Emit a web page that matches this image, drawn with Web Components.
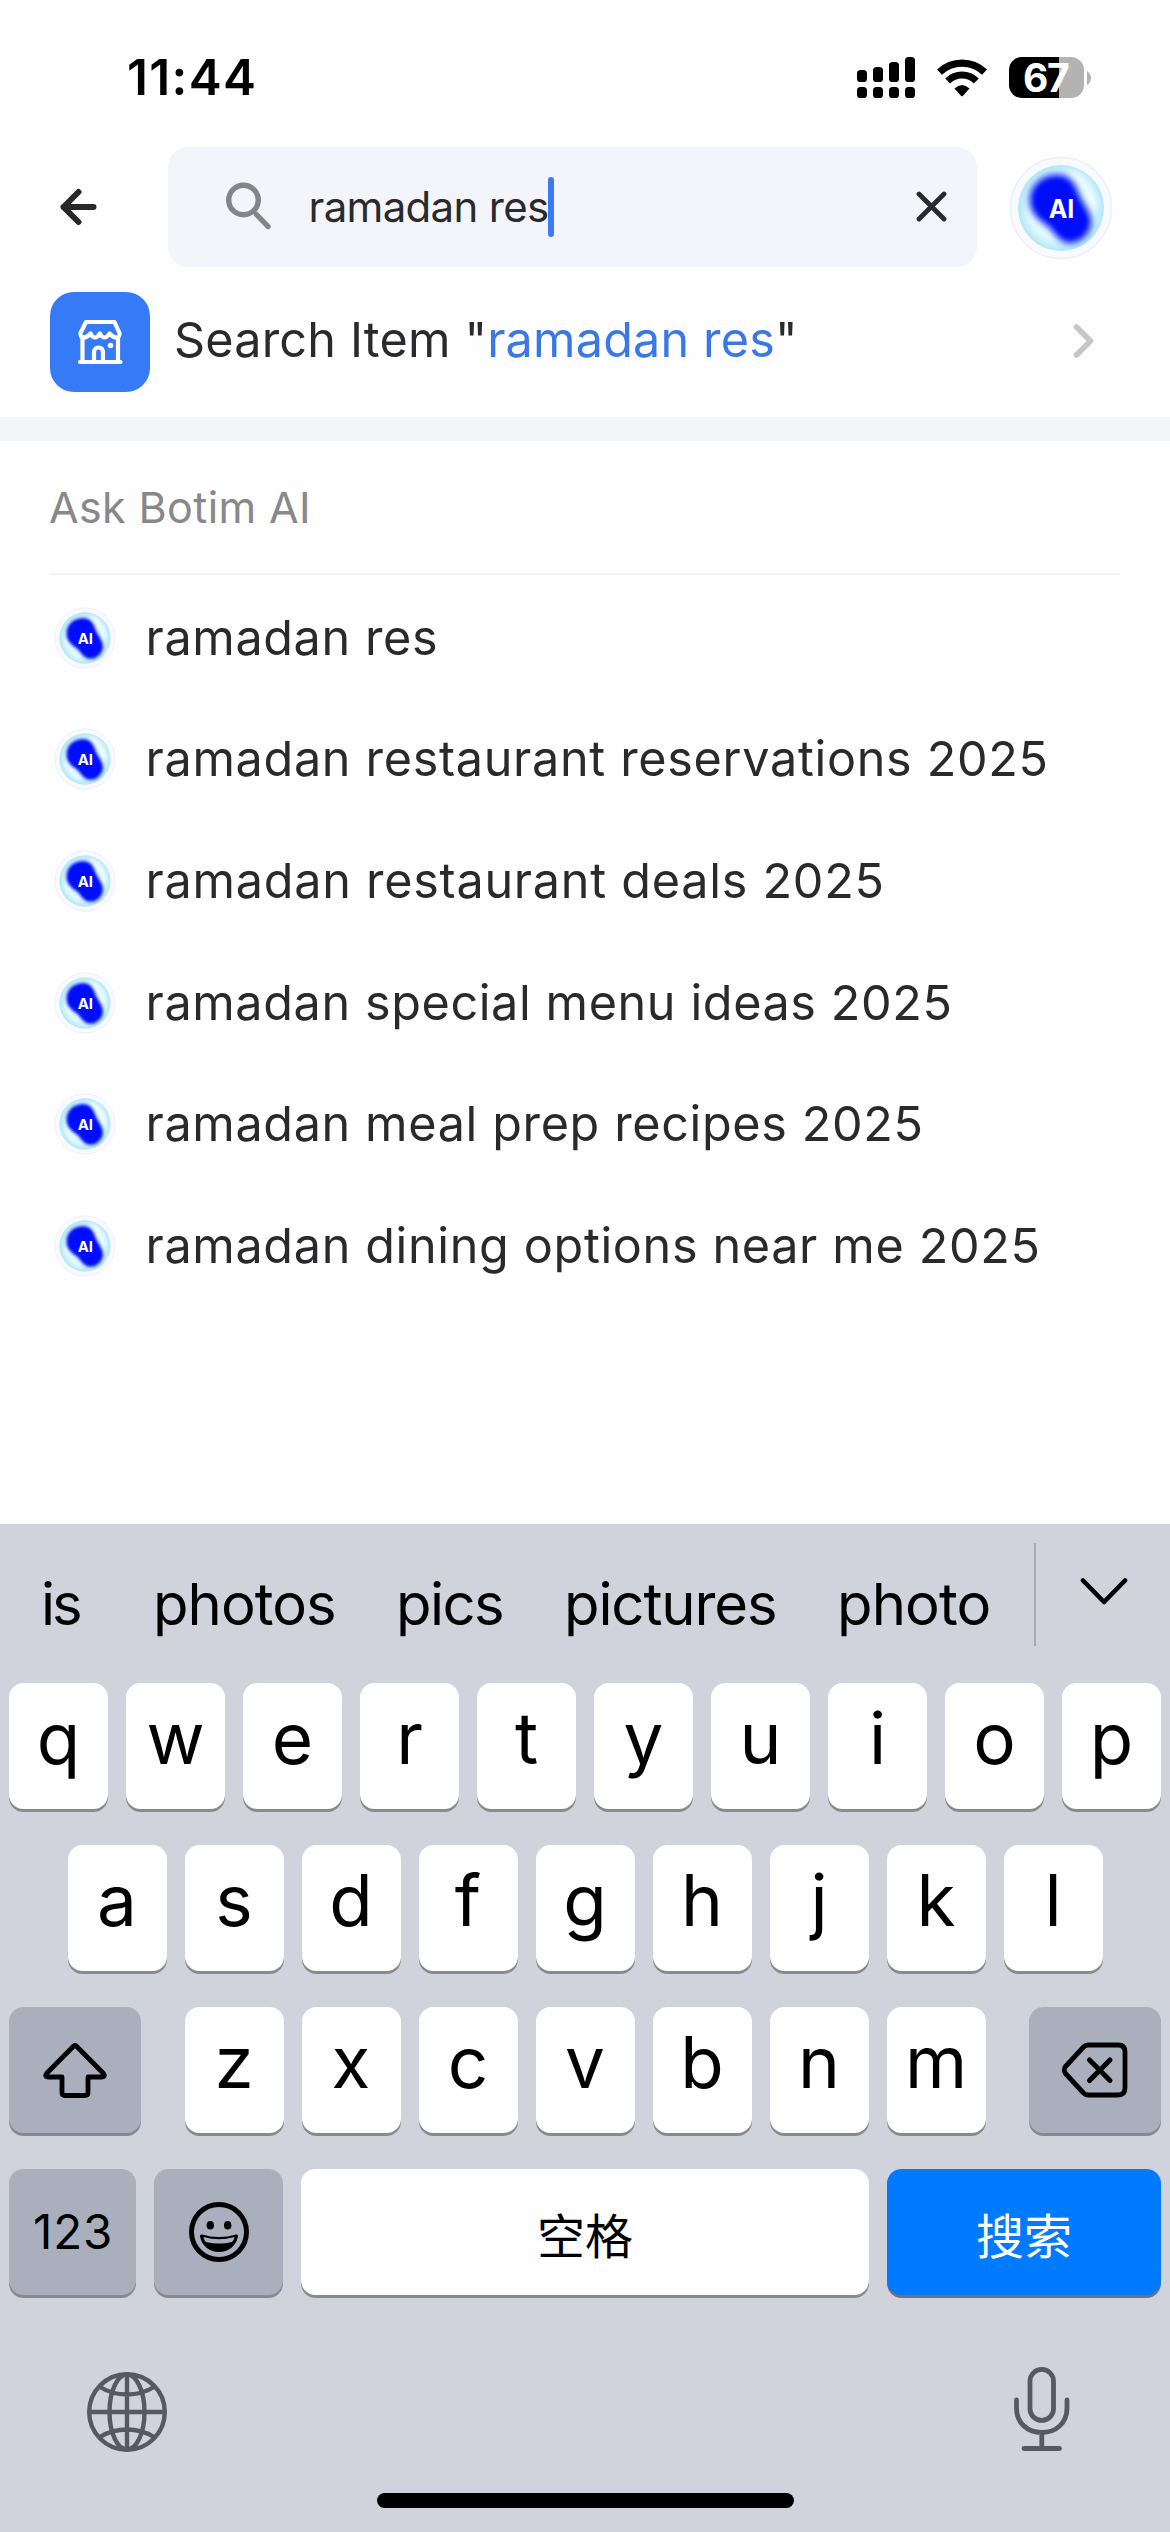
<!DOCTYPE html>
<html lang="zh-CN">
<head>
<meta charset="utf-8">
<title>Search</title>
<style>
html,body{margin:0;padding:0;background:#fefefe}
body{font-family:Inter,"Noto Sans CJK SC",sans-serif;color:#2a2a2c;width:1170px;height:2532px;overflow:hidden}
</style>
</head>
<body>
<search-screen></search-screen>
<script>
const define = (name, html, setup) => {
  const tpl = document.createElement('template');
  tpl.innerHTML = html;
  customElements.define(name, class extends HTMLElement {
    connectedCallback() {
      if (this.shadowRoot) return;
      this.attachShadow({mode: 'open'}).append(tpl.content.cloneNode(true));
      if (setup) setup(this, this.shadowRoot);
    }
  });
};

/* Text whose visible glyphs span exactly `fit` pixels, tracked evenly. */
const ctx = document.createElement('canvas').getContext('2d');
define('fit-text', `
<style>
:host{display:block;white-space:nowrap;line-height:1;flex:none;text-align:left}
span{display:block}
</style><span><slot></slot></span>`, (el, root) => {
  const size = +el.getAttribute('size'), weight = el.getAttribute('weight') || 400, fit = +el.getAttribute('fit');
  const text = el.textContent;
  ctx.font = `${weight} ${size}px Inter`;
  const m = ctx.measureText(text);
  const ink = m.actualBoundingBoxRight + m.actualBoundingBoxLeft;
  el.style.cssText += `;font-size:${size}px;font-weight:${weight};width:${fit}px`;
  const s = root.querySelector('span');
  s.style.letterSpacing = ((fit - ink) / (text.length - 1)).toFixed(3) + 'px';
  s.style.marginLeft = m.actualBoundingBoxLeft.toFixed(2) + 'px';
});

define('signal-icon', `<style>:host{display:block}svg{display:block}</style>
<svg width="58" height="41" viewBox="0 0 58 41">
<rect x="0" y="13" width="10" height="12" rx="3.6"/><rect x="16" y="10" width="10" height="15" rx="3.6"/><rect x="32" y="5" width="10" height="20" rx="3.6"/><rect x="48" y="0" width="10" height="25" rx="3.6"/>
<rect x="0" y="30" width="10" height="11" rx="3.6"/><rect x="16" y="30" width="10" height="11" rx="3.6"/><rect x="32" y="30" width="10" height="11" rx="3.6"/><rect x="48" y="30" width="10" height="11" rx="3.6"/>
</svg>`);

define('wifi-icon', `<style>:host{display:block}svg{display:block}</style>
<svg width="50" height="38" viewBox="0 0 50 38" fill="none" stroke="#000">
<path d="M2.5 13.2A32.5 32.5 0 0 1 47.5 13.2" stroke-width="7.2"/>
<path d="M10.7 22A20.3 20.3 0 0 1 39.3 22" stroke-width="7"/>
<path d="M17.5 29.6Q25 22.600 32.500 29.600L26 36.700Q25 37.700 24 36.700Z" fill="#000" stroke="none"/>
</svg>`);

define('battery-icon', `<style>
:host{display:flex;align-items:center;gap:3px}
.b{width:75px;height:41px;border-radius:13px;background:linear-gradient(90deg,#000 50px,#b3b3b3 50px);display:flex;align-items:center;justify-content:center;color:#fff}
svg{display:block}
</style><div class="b"><fit-text size="39" weight="700" fit="45">67</fit-text></div>
<svg width="4" height="14" viewBox="0 0 4 14"><path d="M0 0Q4 2.500 4 7T0 14Z" fill="#b3b3b3"/></svg>`);

define('status-bar', `<style>
:host{display:flex;box-sizing:border-box;height:147px;padding:8px 79px 0 129px;align-items:center;color:#000}
fit-text{margin-right:auto}
wifi-icon{margin:0 22px 0 22.500px}
</style>
<fit-text size="49.5" weight="600" fit="125">11:44</fit-text>
<signal-icon></signal-icon><wifi-icon></wifi-icon><battery-icon></battery-icon>`);

define('ai-orb', `<style>
:host{display:block;width:var(--orb,104px);height:var(--orb,104px);flex:none}
svg{display:block;width:100%;height:100%}
text{font:700 25px Inter,sans-serif;fill:#fff}
</style>
<svg viewBox="0 0 104 104">
<defs>
<radialGradient id="g"><stop offset="0" stop-color="#e4fbff"/><stop offset=".75" stop-color="#d6f6fd"/><stop offset="1" stop-color="#b4e7f6"/></radialGradient>
<filter id="f" x="-30%" y="-30%" width="160%" height="160%"><feGaussianBlur stdDeviation="3"/></filter>
<filter id="h" x="-60%" y="-60%" width="220%" height="220%"><feGaussianBlur stdDeviation="3.500"/></filter>
</defs>
<circle cx="52" cy="52" r="50.500" fill="#f8faff" stroke="#eceffb" stroke-width="1.500"/>
<circle cx="52" cy="52" r="43" fill="url(#g)"/>
<path d="M63 18Q80 26 84 50" fill="none" stroke="#fff" stroke-width="7" stroke-linecap="round" filter="url(#h)" opacity=".75"/>
<path d="M20 58Q26 76 42 84" fill="none" stroke="#fff" stroke-width="5" stroke-linecap="round" filter="url(#h)" opacity=".6"/>
<path d="M45 19C57 17 65 24 69 36C73 48 84 57 82 69C80 79 71 87 60 87C50 86 46 77 39 70C29 63 21 57 21 44C21 30 32 20 45 19Z" fill="#0511fa" filter="url(#f)"/>
<text x="52.500" y="61.500" text-anchor="middle">AI</text>
</svg>`);

define('search-field', `<style>
:host{display:flex;box-sizing:border-box;width:809px;height:120px;border-radius:20px;background:#f4f5fa;align-items:center;padding:0 29px 0 57px}
svg{display:block;flex:none}
::slotted(fit-text){margin:0 0 0 38.500px;padding-bottom:1px}
i{width:6px;height:60px;border-radius:3px;background:#3a7af5;margin-right:auto}
</style>
<svg width="48" height="50" viewBox="0 0 48 50" fill="none" stroke="#858587" stroke-width="5.400"><circle cx="18.500" cy="18" r="14.800"/><path d="M31.500 32.500L43 44.500" stroke-linecap="round"/></svg>
<slot></slot><i></i>
<svg width="32" height="32" viewBox="0 0 32 32" fill="none" stroke="#2a2a2e" stroke-width="4.800" stroke-linecap="round"><path d="M3 3L28 28M28 3L3 28"/></svg>`);

define('search-header', `<style>
:host{display:flex;height:120px;align-items:center;padding-left:59px}
svg{display:block;flex:none;margin-right:70px}
ai-orb{margin-left:32px;padding-top:2px}
</style>
<svg width="39" height="38" viewBox="0 0 39 38" fill="none" stroke="#28282a" stroke-width="6" stroke-linecap="round" stroke-linejoin="round"><path d="M34.500 19H4.500M19.500 4L4.500 19L19.500 34"/></svg>
<search-field><fit-text size="42" fit="236.500">ramadan res</fit-text></search-field><ai-orb></ai-orb>`);

define('item-row', `<style>
:host{display:flex;height:150px;align-items:center;padding:0 75px 0 50px;border-bottom:24px solid #f4f5f9}
.i{width:100px;height:100px;border-radius:24px;background:#367af5;display:flex;align-items:center;justify-content:center;margin-right:26px}
svg{display:block}
fit-text{margin:0 auto 3px 0}
b{font-weight:inherit;color:#3b78e7}
</style>
<div class="i"><svg width="46" height="46" viewBox="0 0 46 46" fill="none" stroke="#fff" stroke-width="4.200" stroke-linecap="round" stroke-linejoin="round">
<path d="M9 3H37.500L42.500 14Q43 18.500 39.500 18.500Q36 18.500 32.500 14.500Q30 18.500 27.500 18.500T22.800 14.500Q20.500 18.500 18 18.500T13.500 14.500Q10 18.500 7 18.500Q3 18 3.500 14Z"/>
<path d="M5.500 19V42M41 19V42M3 43H43.500M17 42V34Q17 28.500 21.500 28.500T26 34V42"/><circle cx="33.500" cy="26.500" r="2.800" fill="#fff" stroke="none"/></svg></div>
<fit-text size="48.5" fit="617">Search Item "<b>ramadan res</b>"</fit-text>
<svg width="22" height="36" viewBox="0 0 22 36" fill="none" stroke="#c6c6c8" stroke-width="5.600" stroke-linecap="round" stroke-linejoin="round"><path d="M3.500 3L17.500 17L3.500 31"/></svg>`);

define('ask-heading', `<style>
:host{display:flex;height:132px;align-items:center;margin:0 50px;border-bottom:2px solid #f4f4f5;color:#88888a}
fit-text{padding-top:1px}
</style><fit-text size="43" fit="257">Ask Botim AI</fit-text>`);

define('suggestion-list', `<style>
:host{display:flex;flex-direction:column;padding-top:2px}
div{display:flex;height:121.670px;align-items:center;padding-left:54px;--orb:62px}
fit-text{margin:0 0 0 32.500px}
</style>`, (el, root) => {
  for (const [text, w] of [['ramadan res', 287.5], ['ramadan restaurant reservations 2025', 897], ['ramadan restaurant deals 2025', 733], ['ramadan special menu ideas 2025', 801], ['ramadan meal prep recipes 2025', 772], ['ramadan dining options near me 2025', 889]]) {
    const row = document.createElement('div');
    row.innerHTML = `<ai-orb></ai-orb><fit-text size="48.5" fit="${w}">${text}</fit-text>`;
    root.append(row);
  }
});

define('word-bar', `<style>
:host{display:flex;height:159px;align-items:center;padding-left:44px;color:#000}
fit-text{margin-right:66px}
fit-text:first-of-type{margin-right:77px}
fit-text:last-of-type{margin-right:45px}
i{width:2.500px;height:103px;background:#a6a9b1;margin:0 44px 18px 0}
svg{display:block;margin-bottom:25px}
</style>
<fit-text size="58" fit="36">is</fit-text><fit-text size="58" fit="177">photos</fit-text><fit-text size="58" fit="102">pics</fit-text><fit-text size="58" fit="207">pictures</fit-text><fit-text size="58" fit="147.500">photo</fit-text>
<i></i><svg width="48" height="30" viewBox="0 0 48 30" fill="none" stroke="#000" stroke-width="4.600" stroke-linecap="round" stroke-linejoin="round"><path d="M3 4.500L24 26L45 4.500"/></svg>`);

define('key-cap', `<style>
:host{display:flex;box-sizing:border-box;width:99px;height:126px;border-radius:14.500px;background:#fefefe;box-shadow:0 3px 0 #898a8e;align-items:center;justify-content:center;color:#000;font-size:71px;font-weight:400;line-height:1;padding-bottom:15px}
:host([kind=dark]){background:#a9afbc;box-shadow:0 3px 0 #868991;padding:0}
:host([kind=space]){width:568px;font-size:48px;padding:9px 0 0}
:host([kind=go]){width:274px;font-size:48px;background:#007aff;color:#fff;box-shadow:0 3px 0 #6a7288;padding:9px 0 0}
</style><slot></slot>`);

define('key-row', `<style>:host{display:flex;justify-content:center;gap:18px;height:126px}</style><slot></slot>`);

define('key-board', `<style>
:host{display:flex;flex-direction:column;height:1008px;background:#d0d3dc;margin-top:auto}
.keys{display:flex;flex-direction:column;gap:36px}
.shift{width:132px;margin-right:25.500px}
.del{width:132px;margin-left:25.500px}
.num{width:127px}.emo{width:129px}
svg{display:block}
.foot{display:flex;justify-content:space-between;align-items:center;height:86px;margin-top:71px;padding:0 99px 0 86px}
.foot svg:first-child{margin-top:5px}
.home{width:417px;height:15px;border-radius:8px;background:#000;margin:41px auto 0}
</style>
<word-bar></word-bar>
<div class="keys">
<key-row id="r1"></key-row><key-row id="r2"></key-row>
<key-row id="r3">
<key-cap kind="dark" class="shift"><svg width="66" height="58" viewBox="0 0 66 58" fill="none" stroke="#000" stroke-width="4.800" stroke-linejoin="round"><path d="M31.500 5.200Q33 3.800 34.500 5.200L61.500 32.500Q63.500 35.500 60.500 36H46V51.500Q46 54.500 43 54.500H23Q20 54.500 20 51.500V36H5.500Q2.500 35.500 4.500 32.500Z"/></svg></key-cap>
<key-cap kind="dark" class="del"><svg width="68" height="58" viewBox="0 0 68 58" fill="none" stroke="#000" stroke-width="4.800" stroke-linejoin="round" stroke-linecap="round"><path d="M27 4H57Q64 4 64 11V47Q64 54 57 54H27Q24.500 54 22.500 52L4.500 32.500Q2 29 4.500 25.500L22.500 6Q24.500 4 27 4Z"/><path d="M28.500 19L49 39.500M49 19L28.500 39.500" stroke-width="5"/></svg></key-cap>
</key-row>
<key-row>
<key-cap kind="dark" class="num"><fit-text size="47.5" fit="75">123</fit-text></key-cap>
<key-cap kind="dark" class="emo"><svg width="60" height="60" viewBox="0 0 60 60"><circle cx="30" cy="30" r="27.500" fill="none" stroke="#000" stroke-width="5"/><ellipse cx="21.300" cy="23.300" rx="3.700" ry="4.300"/><ellipse cx="38.700" cy="23.300" rx="3.700" ry="4.300"/><path d="M13 32.500Q30 37.500 47 32.500Q49.300 32 49 34.500C47 44.500 39 50 30 50S13 44.500 11 34.500Q10.700 32 13 32.500Z"/><path d="M14.500 35Q30 39.500 45.500 35Q45 38.500 43 40Q30 43 17 40Q15 38.500 14.500 35Z" fill="#a9afbc"/></svg></key-cap>
<key-cap kind="space">空格</key-cap>
<key-cap kind="go">搜索</key-cap>
</key-row>
</div>
<div class="foot">
<svg width="82" height="82" viewBox="0 0 82 82" fill="none" stroke="#565962" stroke-width="4.400"><circle cx="41" cy="41" r="37.800"/><path d="M3 41H79M41 3V79M14 16Q26 23.500 41 23.500T68 16M14 66Q26 58.500 41 58.500T68 66"/><ellipse cx="41" cy="41" rx="17.500" ry="37.500"/></svg>
<svg width="58" height="86" viewBox="0 0 58 86" fill="none" stroke="#565962" stroke-width="4.800" stroke-linecap="round"><rect x="17" y="3.400" width="23.500" height="51" rx="11.750"/><path d="M3.500 34V42C3.500 57 14.500 66.500 28.800 66.500S54 57 54 42V34M28.800 66.500V82M11 82.500H46.500"/></svg>
</div>
<div class="home"></div>`, (el, root) => {
  const cap = c => { const k = document.createElement('key-cap'); k.textContent = c; return k; };
  root.getElementById('r1').append(...[...'qwertyuiop'].map(cap));
  root.getElementById('r2').append(...[...'asdfghjkl'].map(cap));
  root.querySelector('.shift').after(...[...'zxcvbnm'].map(cap));
});

define('search-screen', `<style>
:host{display:flex;flex-direction:column;width:1170px;height:2532px;background:#fefefe;overflow:hidden}
</style>
<status-bar></status-bar><search-header></search-header><item-row></item-row>
<ask-heading></ask-heading><suggestion-list></suggestion-list><key-board></key-board>`);
</script>
</body>
</html>
